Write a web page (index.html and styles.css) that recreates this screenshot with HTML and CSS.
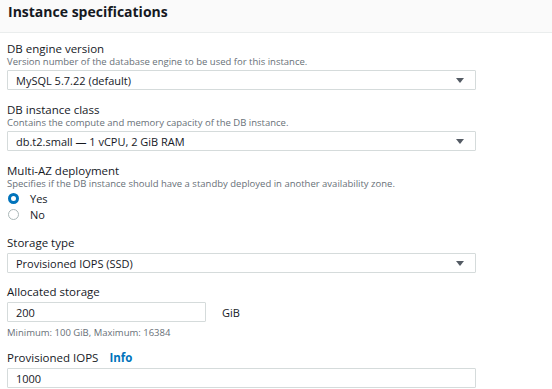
FILE: index.html
```html
<!DOCTYPE html>
<html>
<head>
<meta charset="utf-8">
<link rel="stylesheet" href="styles.css">
</head>
<body>
<div class="panel">
  <div class="header"><h2 class="title">Instance specifications</h2></div>
  <div class="content">
    <div class="field">
      <div class="label">DB engine version</div>
      <div class="desc">Version number of the database engine to be used for this instance.</div>
      <div class="select"><span>MySQL 5.7.22 (default)</span><span class="caret"></span></div>
    </div>
    <div class="field">
      <div class="label">DB instance class</div>
      <div class="desc">Contains the compute and memory capacity of the DB instance.</div>
      <div class="select"><span>db.t2.small — 1 vCPU, 2 GiB RAM</span><span class="caret"></span></div>
    </div>
    <div class="field radiofield">
      <div class="label">Multi-AZ deployment</div>
      <div class="desc">Specifies if the DB instance should have a standby deployed in another availability zone.</div>
      <div class="radios">
        <div class="radio"><span class="dot on"></span><span>Yes</span></div>
        <div class="radio"><span class="dot"></span><span>No</span></div>
      </div>
    </div>
    <div class="field tight">
      <div class="label">Storage type</div>
      <div class="select nodesc"><span>Provisioned IOPS (SSD)</span><span class="caret"></span></div>
    </div>
    <div class="field">
      <div class="label">Allocated storage</div>
      <div class="inrow nodesc">
        <div class="input short">200</div>
        <span class="unit">GiB</span>
      </div>
      <div class="hint">Minimum: 100 GiB, Maximum: 16384</div>
    </div>
    <div class="field last">
      <div class="label">Provisioned IOPS <a class="info">Info</a></div>
      <div class="input nodesc">1000</div>
    </div>
  </div>
</div>
</body>
</html>
```
FILE: styles.css
```css
* { box-sizing: border-box; }
html, body { margin: 0; padding: 0; background: #fff; }
body {
  font-family: "Open Sans", "Noto Sans", sans-serif;
  color: #16191f;
  width: 552px;
  height: 389px;
  overflow: hidden;
}
.header {
  height: 33px;
  background: #fafafa;
  border-bottom: 1px solid #eaeded;
  padding: 3px 0 0 8px;
}
.title {
  margin: 0;
  font-size: 14px;
  line-height: 18px;
  font-weight: 700;
  color: #16191f;
}
.content {
  padding: 9px 0 0 7px;
  width: 476px;
}
.field { margin-bottom: 13px; }
.field.radiofield { margin-bottom: 14px; }
.field.tight { margin-bottom: 12px; }
.field.last { margin-bottom: 0; }
.label {
  font-size: 11.5px;
  line-height: 14px;
  color: #16191f;
}
.info {
  color: #0073bb;
  font-weight: 700;
  margin-left: 8px;
}
.desc {
  font-size: 9.5px;
  line-height: 11px;
  color: #687078;
  margin-bottom: 3px;
}
.hint {
  font-size: 9.5px;
  line-height: 11px;
  color: #687078;
  margin-top: 5px;
}
.select, .input {
  height: 20px;
  border: 1px solid #d5dbdb;
  border-radius: 1px;
  display: flex;
  align-items: center;
  justify-content: space-between;
  padding: 0 11px 0 8px;
  font-size: 11px;
  color: #16191f;
}
.nodesc { margin-top: 3px; }
.select .caret {
  width: 0;
  height: 0;
  border-left: 4.5px solid transparent;
  border-right: 4.5px solid transparent;
  border-top: 5px solid #545b64;
}
.inrow {
  display: flex;
  align-items: center;
}
.input.short { width: 199px; }
.unit {
  margin-left: 16px;
  font-size: 11px;
}
.radios { display: flex; flex-direction: column; margin-top: -2px; }
.radio {
  display: flex;
  align-items: center;
  height: 16px;
  font-size: 11px;
}
.dot {
  width: 11px;
  height: 11px;
  border-radius: 50%;
  border: 1px solid #aab7b8;
  margin-left: 1px;
  margin-right: 11px;
}
.dot.on {
  border: 3.5px solid #0073bb;
}
```
